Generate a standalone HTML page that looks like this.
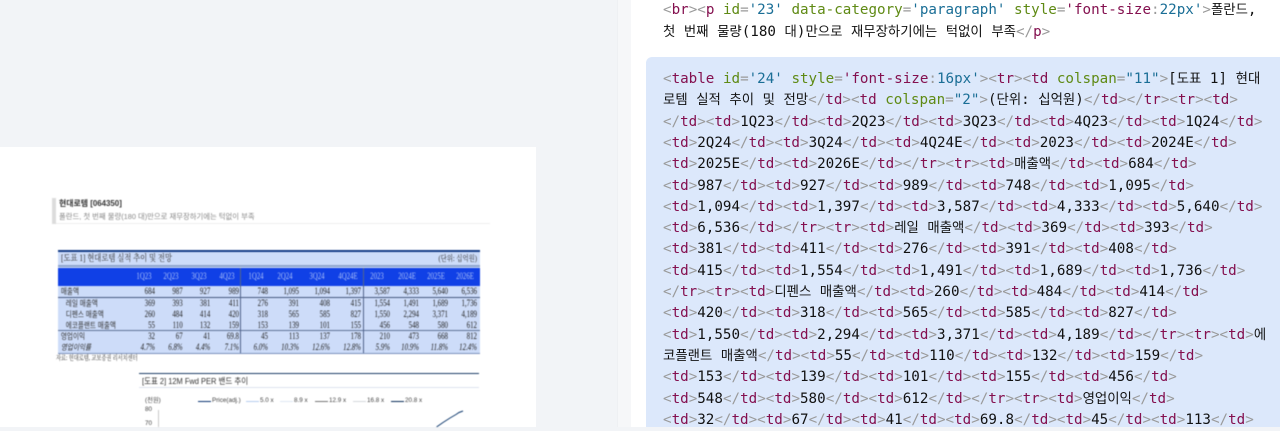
<!DOCTYPE html>
<html lang="ko"><head><meta charset="utf-8"><title>Document parse</title>
<style>
html,body{margin:0;padding:0;width:1280px;height:427px;overflow:hidden;background:#f2f4f7}
#sep{position:absolute;left:617px;top:0;width:14px;height:427px;background:#f6f7f9;border-left:1px solid #eef0f3;box-sizing:border-box}
#right{position:absolute;left:631px;top:0;width:649px;height:427px;background:#fff;overflow:hidden}
#blk{position:absolute;left:15px;top:57px;width:640px;height:380px;background:#dce8fb;border-radius:6px}
.l{position:absolute;left:663px;margin-top:1.5px;white-space:pre;font:14.22px/21px "DejaVu Sans Mono","Liberation Mono",monospace;color:#9a9a9a}
.l b{font-weight:400;color:#84104f}
.l u{text-decoration:none;color:#111}
.l em{font-style:normal;color:#111;font-family:"Noto Sans CJK KR","NanumGothic",sans-serif;font-size:13.4px;line-height:0}
.l a{color:#5f8a14}
.l s{text-decoration:none;color:#1a6e96}
#page{position:absolute;left:0;top:147px;width:536px;height:280px;background:#fff}
#doc{position:absolute;left:0;top:0;width:536px;height:427px;filter:blur(.4px);overflow:hidden;font-family:"Liberation Serif","Noto Serif CJK SC","Noto Sans CJK KR",serif;color:#222}
#doc div{position:absolute;white-space:nowrap}
.g{display:grid;left:58px;width:422px;grid-template-columns:70px 27px 27.7px 27.3px 29px 29px 31px 31px 31px 29px 29px 29px 29px;font-size:9.6px;line-height:11px;height:11px}
.g span{display:block;text-align:right;transform:scaleX(.72);transform-origin:100% 50%}
.g span:first-child{text-align:left;font-family:"Noto Sans CJK KR",sans-serif;font-size:8px;color:#333;padding-left:3.5px;transform:scaleX(.82);transform-origin:0 50%}
.g.s span:first-child{padding-left:9.5px}
.g.it{font-style:italic}
.h{top:268px;height:18px;line-height:18px;font-size:9.5px;color:#aac0f8;transform:translateX(-50%) scaleX(.72)}
.sa{font-family:"Liberation Sans","Noto Sans CJK KR",sans-serif!important}
.lg{font:6.3px/8px "Liberation Sans",sans-serif;top:397px;color:#444}
.ll{top:400.6px;width:13px;height:1.3px}
</style></head><body>
<div id="sep"></div>
<div id="page"></div>
<div id="doc">
<div style="left:52px;top:198px;width:4px;height:26px;background:#dcdcdc"></div>
<div style="left:56px;top:223px;width:434px;height:1px;background:#eeeeee"></div>
<div class="sa" style="left:59px;top:199px;font-size:7.9px;line-height:10px;font-weight:700;color:#333">현대로템 [064350]</div>
<div class="sa" style="left:59px;top:212px;font-size:7.35px;line-height:10px;color:#888">폴란드, 첫 번째 물량(180 대)만으로 재무장하기에는 턱없이 부족</div>

<div style="left:58px;top:251px;width:422px;height:102px;background:#cddcf9"></div>
<div style="left:58px;top:250px;width:422px;height:1.5px;background:#123a86"></div>
<div style="left:58px;top:265px;width:422px;height:1.5px;background:#8ea4cc"></div>
<div style="left:58px;top:268px;width:422px;height:18px;background:#1040e6"></div>
<div style="left:58px;top:297px;width:422px;height:1px;background:#46597f"></div>
<div style="left:58px;top:330px;width:422px;height:1px;background:#5f7398"></div>
<div style="left:58px;top:352.5px;width:422px;height:1px;background:#7d93bd"></div>
<div style="left:240px;top:268px;width:1.2px;height:85px;background:#51648c"></div>
<div style="left:362.5px;top:268px;width:1.2px;height:85px;background:#51648c"></div>
<div style="left:61px;top:253px;font-size:9px;line-height:11px;color:#333;transform:scaleX(.81);transform-origin:0 50%">[도표 1] 현대로템 실적 추이 및 전망</div>
<div style="left:377px;top:253px;width:100px;text-align:right;font-size:8px;line-height:11px;color:#333;transform:scaleX(.8);transform-origin:100% 50%">(단위: 십억원)</div>

<div class="h" style="left:144px">1Q23</div><div class="h" style="left:171px">2Q23</div><div class="h" style="left:199px">3Q23</div><div class="h" style="left:227px">4Q23</div><div class="h" style="left:256px">1Q24</div><div class="h" style="left:285px">2Q24</div><div class="h" style="left:317px">3Q24</div><div class="h" style="left:348px">4Q24E</div><div class="h" style="left:377px">2023</div><div class="h" style="left:407px">2024E</div><div class="h" style="left:436px">2025E</div><div class="h" style="left:465px">2026E</div>

<div class="g" style="top:285.5px"><span>매출액</span><span>684</span><span>987</span><span>927</span><span>989</span><span>748</span><span>1,095</span><span>1,094</span><span>1,397</span><span>3,587</span><span>4,333</span><span>5,640</span><span>6,536</span></div>
<div class="g s" style="top:298px"><span>레일 매출액</span><span>369</span><span>393</span><span>381</span><span>411</span><span>276</span><span>391</span><span>408</span><span>415</span><span>1,554</span><span>1,491</span><span>1,689</span><span>1,736</span></div>
<div class="g s" style="top:308.5px"><span>디펜스 매출액</span><span>260</span><span>484</span><span>414</span><span>420</span><span>318</span><span>565</span><span>585</span><span>827</span><span>1,550</span><span>2,294</span><span>3,371</span><span>4,189</span></div>
<div class="g s" style="top:319.5px"><span>에코플랜트 매출액</span><span>55</span><span>110</span><span>132</span><span>159</span><span>153</span><span>139</span><span>101</span><span>155</span><span>456</span><span>548</span><span>580</span><span>612</span></div>
<div class="g" style="top:330.5px"><span>영업이익</span><span>32</span><span>67</span><span>41</span><span>69.8</span><span>45</span><span>113</span><span>137</span><span>178</span><span>210</span><span>473</span><span>668</span><span>812</span></div>
<div class="g it" style="top:341.5px"><span style="font-style:italic">영업이익률</span><span>4.7%</span><span>6.8%</span><span>4.4%</span><span>7.1%</span><span>6.0%</span><span>10.3%</span><span>12.6%</span><span>12.8%</span><span>5.9%</span><span>10.9%</span><span>11.8%</span><span>12.4%</span></div>
<div style="left:56px;top:353px;font-size:7px;line-height:10px;color:#333;transform:scaleX(.74);transform-origin:0 50%">자료: 현대로템, 교보증권 리서치센터</div>

<div style="left:139px;top:373px;width:340px;height:1.2px;background:#1f4068"></div>
<div style="left:139px;top:387px;width:340px;height:1px;background:#dde3ee"></div>
<div class="sa" style="left:142px;top:375px;font-size:8.6px;line-height:12px;color:#333;transform:scaleX(.87);transform-origin:0 50%">[도표 2] 12M Fwd PER 밴드 추이</div>
<div class="lg sa" style="left:145px">(천원)</div>
<div class="lg" style="left:145px;top:406px">80</div>
<div class="lg" style="left:145px;top:420px">70</div>
<div style="left:158px;top:410px;width:1px;height:17px;background:#c9c9c9"></div>
<div class="ll" style="left:198px;background:#0c3573"></div><div class="lg" style="left:212px">Price(adj.)</div>
<div class="ll" style="left:246px;background:#b5cdee"></div><div class="lg" style="left:260px">5.0 x</div>
<div class="ll" style="left:280px;background:#dfe8f4"></div><div class="lg" style="left:294px">8.9 x</div>
<div class="ll" style="left:315px;background:#777"></div><div class="lg" style="left:329px">12.9 x</div>
<div class="ll" style="left:353px;background:#d5d8dc"></div><div class="lg" style="left:367px">16.8 x</div>
<div class="ll" style="left:391px;background:#0a2c5a"></div><div class="lg" style="left:405px">20.8 x</div>
<svg style="position:absolute;left:430px;top:405px" width="40" height="24" viewBox="0 0 40 24"><path d="M6.5 22L13 17.5L20 13L26 9.5L29 7.5L33 6" fill="none" stroke="#103a6e" stroke-width="1"/></svg>
</div>

<div id="right"><div id="blk"></div></div>

<div class="l" style="top:-1.5px">&lt;<b>br</b>&gt;&lt;<b>p</b> <a>id</a>=<s>'23'</s> <a>data-category</a>=<s>'paragraph'</s> <a>style</a>=<b>'font-size</b>:<s>22px'</s>&gt;<em>폴란드</em><u>,</u></div>
<div class="l" style="top:20.5px"><em>첫</em><u> </u><em>번째</em><u> </u><em>물량</em><u>(180 </u><em>대</em><u>)</u><em>만으로</em><u> </u><em>재무장하기에는</em><u> </u><em>턱없이</em><u> </u><em>부족</em>&lt;/<b>p</b>&gt;</div>

<div class="l" style="top:67.5px">&lt;<b>table</b> <a>id</a>=<s>'24'</s> <a>style</a>=<b>'font-size</b>:<s>16px'</s>&gt;&lt;<b>tr</b>&gt;&lt;<b>td</b> <a>colspan</a>=<s>"11"</s>&gt;<u>[</u><em>도표</em><u> 1] </u><em>현대</em></div>
<div class="l" style="top:88.8px"><em>로템</em><u> </u><em>실적</em><u> </u><em>추이</em><u> </u><em>및</em><u> </u><em>전망</em>&lt;/<b>td</b>&gt;&lt;<b>td</b> <a>colspan</a>=<s>"2"</s>&gt;<u>(</u><em>단위</em><u>: </u><em>십억원</em><u>)</u>&lt;/<b>td</b>&gt;&lt;/<b>tr</b>&gt;&lt;<b>tr</b>&gt;&lt;<b>td</b>&gt;</div>
<div class="l" style="top:110.1px">&lt;/<b>td</b>&gt;&lt;<b>td</b>&gt;<u>1Q23</u>&lt;/<b>td</b>&gt;&lt;<b>td</b>&gt;<u>2Q23</u>&lt;/<b>td</b>&gt;&lt;<b>td</b>&gt;<u>3Q23</u>&lt;/<b>td</b>&gt;&lt;<b>td</b>&gt;<u>4Q23</u>&lt;/<b>td</b>&gt;&lt;<b>td</b>&gt;<u>1Q24</u>&lt;/<b>td</b>&gt;</div>
<div class="l" style="top:131.4px">&lt;<b>td</b>&gt;<u>2Q24</u>&lt;/<b>td</b>&gt;&lt;<b>td</b>&gt;<u>3Q24</u>&lt;/<b>td</b>&gt;&lt;<b>td</b>&gt;<u>4Q24E</u>&lt;/<b>td</b>&gt;&lt;<b>td</b>&gt;<u>2023</u>&lt;/<b>td</b>&gt;&lt;<b>td</b>&gt;<u>2024E</u>&lt;/<b>td</b>&gt;</div>
<div class="l" style="top:152.7px">&lt;<b>td</b>&gt;<u>2025E</u>&lt;/<b>td</b>&gt;&lt;<b>td</b>&gt;<u>2026E</u>&lt;/<b>td</b>&gt;&lt;/<b>tr</b>&gt;&lt;<b>tr</b>&gt;&lt;<b>td</b>&gt;<em>매출액</em>&lt;/<b>td</b>&gt;&lt;<b>td</b>&gt;<u>684</u>&lt;/<b>td</b>&gt;</div>
<div class="l" style="top:174px">&lt;<b>td</b>&gt;<u>987</u>&lt;/<b>td</b>&gt;&lt;<b>td</b>&gt;<u>927</u>&lt;/<b>td</b>&gt;&lt;<b>td</b>&gt;<u>989</u>&lt;/<b>td</b>&gt;&lt;<b>td</b>&gt;<u>748</u>&lt;/<b>td</b>&gt;&lt;<b>td</b>&gt;<u>1,095</u>&lt;/<b>td</b>&gt;</div>
<div class="l" style="top:195.3px">&lt;<b>td</b>&gt;<u>1,094</u>&lt;/<b>td</b>&gt;&lt;<b>td</b>&gt;<u>1,397</u>&lt;/<b>td</b>&gt;&lt;<b>td</b>&gt;<u>3,587</u>&lt;/<b>td</b>&gt;&lt;<b>td</b>&gt;<u>4,333</u>&lt;/<b>td</b>&gt;&lt;<b>td</b>&gt;<u>5,640</u>&lt;/<b>td</b>&gt;</div>
<div class="l" style="top:216.6px">&lt;<b>td</b>&gt;<u>6,536</u>&lt;/<b>td</b>&gt;&lt;/<b>tr</b>&gt;&lt;<b>tr</b>&gt;&lt;<b>td</b>&gt;<em>레일</em><u> </u><em>매출액</em>&lt;/<b>td</b>&gt;&lt;<b>td</b>&gt;<u>369</u>&lt;/<b>td</b>&gt;&lt;<b>td</b>&gt;<u>393</u>&lt;/<b>td</b>&gt;</div>
<div class="l" style="top:237.9px">&lt;<b>td</b>&gt;<u>381</u>&lt;/<b>td</b>&gt;&lt;<b>td</b>&gt;<u>411</u>&lt;/<b>td</b>&gt;&lt;<b>td</b>&gt;<u>276</u>&lt;/<b>td</b>&gt;&lt;<b>td</b>&gt;<u>391</u>&lt;/<b>td</b>&gt;&lt;<b>td</b>&gt;<u>408</u>&lt;/<b>td</b>&gt;</div>
<div class="l" style="top:259.2px">&lt;<b>td</b>&gt;<u>415</u>&lt;/<b>td</b>&gt;&lt;<b>td</b>&gt;<u>1,554</u>&lt;/<b>td</b>&gt;&lt;<b>td</b>&gt;<u>1,491</u>&lt;/<b>td</b>&gt;&lt;<b>td</b>&gt;<u>1,689</u>&lt;/<b>td</b>&gt;&lt;<b>td</b>&gt;<u>1,736</u>&lt;/<b>td</b>&gt;</div>
<div class="l" style="top:280.5px">&lt;/<b>tr</b>&gt;&lt;<b>tr</b>&gt;&lt;<b>td</b>&gt;<em>디펜스</em><u> </u><em>매출액</em>&lt;/<b>td</b>&gt;&lt;<b>td</b>&gt;<u>260</u>&lt;/<b>td</b>&gt;&lt;<b>td</b>&gt;<u>484</u>&lt;/<b>td</b>&gt;&lt;<b>td</b>&gt;<u>414</u>&lt;/<b>td</b>&gt;</div>
<div class="l" style="top:301.8px">&lt;<b>td</b>&gt;<u>420</u>&lt;/<b>td</b>&gt;&lt;<b>td</b>&gt;<u>318</u>&lt;/<b>td</b>&gt;&lt;<b>td</b>&gt;<u>565</u>&lt;/<b>td</b>&gt;&lt;<b>td</b>&gt;<u>585</u>&lt;/<b>td</b>&gt;&lt;<b>td</b>&gt;<u>827</u>&lt;/<b>td</b>&gt;</div>
<div class="l" style="top:323.1px">&lt;<b>td</b>&gt;<u>1,550</u>&lt;/<b>td</b>&gt;&lt;<b>td</b>&gt;<u>2,294</u>&lt;/<b>td</b>&gt;&lt;<b>td</b>&gt;<u>3,371</u>&lt;/<b>td</b>&gt;&lt;<b>td</b>&gt;<u>4,189</u>&lt;/<b>td</b>&gt;&lt;/<b>tr</b>&gt;&lt;<b>tr</b>&gt;&lt;<b>td</b>&gt;<em>에</em></div>
<div class="l" style="top:344.4px"><em>코플랜트</em><u> </u><em>매출액</em>&lt;/<b>td</b>&gt;&lt;<b>td</b>&gt;<u>55</u>&lt;/<b>td</b>&gt;&lt;<b>td</b>&gt;<u>110</u>&lt;/<b>td</b>&gt;&lt;<b>td</b>&gt;<u>132</u>&lt;/<b>td</b>&gt;&lt;<b>td</b>&gt;<u>159</u>&lt;/<b>td</b>&gt;</div>
<div class="l" style="top:365.7px">&lt;<b>td</b>&gt;<u>153</u>&lt;/<b>td</b>&gt;&lt;<b>td</b>&gt;<u>139</u>&lt;/<b>td</b>&gt;&lt;<b>td</b>&gt;<u>101</u>&lt;/<b>td</b>&gt;&lt;<b>td</b>&gt;<u>155</u>&lt;/<b>td</b>&gt;&lt;<b>td</b>&gt;<u>456</u>&lt;/<b>td</b>&gt;</div>
<div class="l" style="top:387px">&lt;<b>td</b>&gt;<u>548</u>&lt;/<b>td</b>&gt;&lt;<b>td</b>&gt;<u>580</u>&lt;/<b>td</b>&gt;&lt;<b>td</b>&gt;<u>612</u>&lt;/<b>td</b>&gt;&lt;/<b>tr</b>&gt;&lt;<b>tr</b>&gt;&lt;<b>td</b>&gt;<em>영업이익</em>&lt;/<b>td</b>&gt;</div>
<div class="l" style="top:408.3px">&lt;<b>td</b>&gt;<u>32</u>&lt;/<b>td</b>&gt;&lt;<b>td</b>&gt;<u>67</u>&lt;/<b>td</b>&gt;&lt;<b>td</b>&gt;<u>41</u>&lt;/<b>td</b>&gt;&lt;<b>td</b>&gt;<u>69.8</u>&lt;/<b>td</b>&gt;&lt;<b>td</b>&gt;<u>45</u>&lt;/<b>td</b>&gt;&lt;<b>td</b>&gt;<u>113</u>&lt;/<b>td</b>&gt;</div>
</body></html>
